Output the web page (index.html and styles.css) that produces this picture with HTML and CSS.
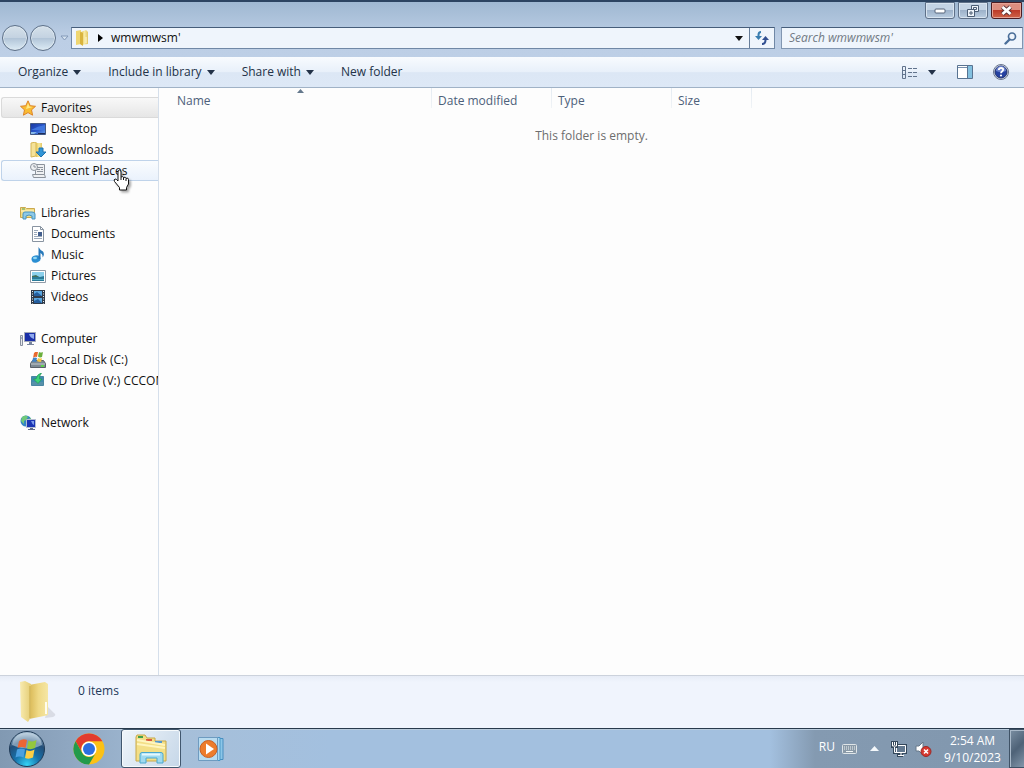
FILE: index.html
```html
<!DOCTYPE html>
<html lang="en">
<head>
<meta charset="utf-8">
<title>wmwmwsm'</title>
<link rel="stylesheet" href="styles.css">
</head>
<body>
<svg class="defs" aria-hidden="true">
  <defs>
    <linearGradient id="gold" x1="0" x2="1" y2="0"><stop offset="0" stop-color="#e2c04f"/><stop offset=".5" stop-color="#f8eaa2"/><stop offset="1" stop-color="#e3c765"/></linearGradient>
    <linearGradient id="flap" x1="0" x2="1" y2="0"><stop offset="0" stop-color="#f8ebb0"/><stop offset="1" stop-color="#e5cd74"/></linearGradient>
    <linearGradient id="leaf" x1="0" x2="1" y2="0"><stop offset="0" stop-color="#d9b855"/><stop offset=".5" stop-color="#efd986"/><stop offset="1" stop-color="#f5e6a4"/></linearGradient>
    <linearGradient id="screen" x1="0" x2="1" y1="0" y2="1"><stop offset="0" stop-color="#1838a0"/><stop offset=".55" stop-color="#2a58cc"/><stop offset="1" stop-color="#6ba4ee"/></linearGradient>
    <radialGradient id="orb" cx=".5" cy=".95" r=".9"><stop offset="0" stop-color="#35d3f5"/><stop offset=".4" stop-color="#1772ab"/><stop offset=".75" stop-color="#234e78"/><stop offset="1" stop-color="#a5bed2"/></radialGradient>
    <symbol id="caret" viewBox="0 0 8 5"><path d="M0 0h8L4 5z" fill="currentColor"/></symbol>
  </defs>
</svg>
<main class="window">
  <header class="frame">
    <div class="caption">
      <button class="cap" aria-label="Minimize"><svg width="12" height="6" viewBox="0 0 12 6"><rect x="1" y="1" width="10" height="4" rx="1" fill="#fff" stroke="#56657a"/></svg></button>
      <button class="cap" aria-label="Restore"><svg width="14" height="12" viewBox="0 0 14 12" fill="#eef4fa" stroke="#4c5e75"><path d="M5.500 .5h7v6h-7z"/><path d="M7.500 2.500h3v2h-3z"/><path d="M1.500 4.500h7v7h-7z"/><path d="M4 7h2v2H4z"/></svg></button>
      <button class="cap close" aria-label="Close"><svg width="13" height="11" viewBox="0 0 13 11"><path d="M2.500 2l8 7M10.500 2l-8 7" stroke="#5b3236" stroke-width="4.500"/><path d="M2.500 2l8 7M10.500 2l-8 7" stroke="#fff" stroke-width="2.800"/></svg></button>
    </div>
    <div class="navrow">
      <div class="travel">
        <button class="round" aria-label="Back"></button>
        <button class="round" aria-label="Forward"></button>
        <button class="recent" aria-label="Recent pages"><svg width="9" height="6" viewBox="0 0 9 6"><path d="M1 1h7L4.500 5z" fill="#d5e2f0" stroke="#8299b8"/></svg></button>
      </div>
      <div class="address">
        <div class="crumbs">
          <svg width="16" height="18" viewBox="0 0 16 18"><path d="M2 2l5-1v14l-5 1z" fill="#efd671"/><path d="M7 3l5-2 2 2v12l-7 1z" fill="url(#gold)"/><path d="M6 3l3 1v13l-3-2z" fill="#d9b43e"/><path d="M12 8v6" stroke="#fff8cf"/></svg>
          <svg class="arrow" width="5" height="8" viewBox="0 0 5 8"><path d="M0 0l5 4-5 4z"/></svg>
          <span>wmwmwsm'</span>
        </div>
        <button class="drop" aria-label="Previous locations"><svg width="8" height="5"><use href="#caret"/></svg></button>
        <button class="refresh" aria-label="Refresh"><svg width="14" height="14" viewBox="0 0 14 14" fill="none" stroke-width="2"><path d="M6 1Q3.500 1 3.500 4v2" stroke="#3a7eb0"/><path d="M0 5h7L3.500 9z" fill="#3a7eb0"/><path d="M7 13q3.500 0 3.500-4V8" stroke="#314f91"/><path d="M7 9h7l-3.500-4z" fill="#314f91"/></svg></button>
      </div>
      <label class="search">
        <input type="text" placeholder="Search wmwmwsm'" aria-label="Search wmwmwsm'">
        <svg width="13" height="13" viewBox="0 0 13 13" fill="none" stroke="#4a6e99"><circle cx="8" cy="4.500" r="3.500" stroke-width="1.700"/><path d="M5.500 7.500L1.500 11.500" stroke-width="2.400" stroke-linecap="round"/></svg>
      </label>
    </div>
  </header>
  <nav class="commands" aria-label="Commands">
    <button>Organize<svg width="8" height="5"><use href="#caret"/></svg></button>
    <button>Include in library<svg width="8" height="5"><use href="#caret"/></svg></button>
    <button>Share with<svg width="8" height="5"><use href="#caret"/></svg></button>
    <button>New folder</button>
    <div class="tools">
      <button aria-label="Change view"><svg width="16" height="13" viewBox="0 0 16 13" fill="none" stroke="#61738c"><path d="M.5.5h3v12h-3zM.5 4.500h3M.5 8.500h3"/><path d="M6 2.500h10M6 6.500h10M6 10.500h10" stroke-dasharray="4 1"/></svg></button>
      <button class="more" aria-label="More view options"><svg width="8" height="5"><use href="#caret"/></svg></button>
      <button class="preview" aria-label="Show the preview pane"><svg width="16" height="14" viewBox="0 0 16 14"><path d="M.5.5h15v13H.5z" fill="#fff" stroke="#587391"/><path d="M1 2.500h9" stroke="#7890ad"/><path d="M10 1h5v12h-5z" fill="#83c0df"/><path d="M10.500 1v12" stroke="#587391"/></svg></button>
      <button class="help" aria-label="Help"><svg width="16" height="16" viewBox="0 0 16 16"><circle cx="8" cy="8" r="7.500" fill="#dce3ee" stroke="#68748c"/><circle cx="8" cy="8" r="6" fill="#2541a1" stroke="#233268"/><path d="M3 7a5 5 0 0 1 10 0Q8 9 3 7" fill="#6c83ce"/><path d="M5.800 6q.2-2 2.300-2t2.100 1.800C10.200 7.300 8 7.200 8 9.200" fill="none" stroke="#fff" stroke-width="1.800"/><circle cx="8" cy="11.500" r="1.100" fill="#fff"/></svg></button>
    </div>
  </nav>
  <div class="content">
    <aside class="sidebar">
      <ul class="group">
        <li><a class="item head selected" href="#favorites"><svg viewBox="0 0 16 16"><path d="M8 .8l2.200 4.900 5.300.6-4 3.600 1.100 5.300L8 12.600l-4.600 2.600 1.100-5.300-4-3.600 5.300-.6z" fill="#f9bc32" stroke="#dd8429"/><path d="M8 3l1.400 3.600 3.400.5L6 9z" fill="#ffe887"/></svg><span>Favorites</span></a></li>
        <li><a class="item" href="#desktop"><svg viewBox="0 0 16 16"><path d="M.5 2.500h15v11H.5z" fill="url(#screen)" stroke="#425885"/><path d="M1 9q7-4 14-5v5z" fill="#4076df"/><path d="M1 11h6l-3 2H1z" fill="#85b7e8"/><path d="M8 12.500h7" stroke="#1c2d5c"/></svg><span>Desktop</span></a></li>
        <li><a class="item" href="#downloads"><svg viewBox="0 0 16 16"><path d="M1 1l5-1v14l-5 1z" fill="#f5e298" stroke="#d5b656"/><path d="M6 1h6v14H6z" fill="url(#gold)"/><path d="M9 6h4v4h3l-5 5-5-5h3z" fill="#3295d6" stroke="#2073ad"/></svg><span>Downloads</span></a></li>
        <li><a class="item hover" href="#recent"><svg viewBox="0 0 16 16" stroke="#8b929b" fill="#eef0f2"><path d="M5.500 1.500h9v10h-9z"/><path d="M7 4.500h6M7 6.500h3M11 6.500h2M7 8.500h6"/><circle cx="4" cy="4" r="3.500"/><path d="M4 2v2h2M2.500 11.500h12l1 3h-12z"/></svg><span>Recent Places</span></a></li>
      </ul>
      <ul class="group">
        <li><a class="item head" href="#libraries"><svg viewBox="0 0 16 16"><path d="M.5 2.500h5l1 1h8v9H.5z" fill="#f2dc86" stroke="#cba94e"/><path d="M2 4h3" stroke="#5ca356"/><path d="M1 6h13" stroke="#fff6c8"/><path d="M3 14V9q0-2 2-2h7q3 0 3 2v5h-3v-3q-3-2-6 0v3z" fill="#8dc9e8" stroke="#4994c1"/></svg><span>Libraries</span></a></li>
        <li><a class="item" href="#documents"><svg viewBox="0 0 16 16"><path d="M2.500.5h8l3 3v12h-11z" fill="#fff" stroke="#8994a1"/><path d="M10.500.5v3h3" fill="none" stroke="#8994a1"/><path d="M4 4.500h4M4 6.500h3M4 8.500h3M4 10.500h8M4 12.500h8" stroke="#9ba9ba"/><path d="M8 6h4v4H8z" fill="#435f8e"/></svg><span>Documents</span></a></li>
        <li><a class="item" href="#music"><svg viewBox="0 0 16 16"><ellipse cx="6" cy="12" rx="4.500" ry="3.500" fill="#2a8ed2" transform="rotate(-15 6 12)"/><path d="M8.500 12V0Q10 3 13 4.500q2 3-.5 6Q13 7 10.500 6v6z" fill="#2879ba"/><ellipse cx="5" cy="11" rx="2" ry="1.200" fill="#8fd6f4"/></svg><span>Music</span></a></li>
        <li><a class="item" href="#pictures"><svg viewBox="0 0 16 16"><path d="M.5 2.500h15v12H.5z" fill="#fff" stroke="#909ba7"/><path d="M2 4h12v9H2z" fill="#8bd0ec"/><path d="M2 9l4-1 4 1 4-1v5H2z" fill="#297a98"/><path d="M2 8l4-1 3 2H2z" fill="#426e58"/><path d="M2 11.500h12" stroke="#57b1c8"/></svg><span>Pictures</span></a></li>
        <li><a class="item" href="#videos"><svg viewBox="0 0 16 16"><path d="M1 1h14v14H1z" fill="#303b49"/><path d="M4 2h8v5H4zM4 9h8v5H4z" fill="#5aa6df"/><path d="M4 5l3-2 5 4H4zM4 12l4-2 4 4H4z" fill="#245e9e"/><path d="M2.500 2v13M13.500 2v13" stroke="#e9edf0" stroke-dasharray="1 1.500"/></svg><span>Videos</span></a></li>
      </ul>
      <ul class="group">
        <li><a class="item head" href="#computer"><svg viewBox="0 0 16 16"><path d="M.5 4.500h2v10h-2z" fill="#e8eaed" stroke="#8991a0"/><path d="M1 7h1" stroke="#6179a5"/><path d="M4.500 1.500h11v9h-11z" fill="#1a2fa8" stroke="#a3a9b8"/><path d="M9 3h5v5q-4-1-5-5" fill="#8ea8ee"/><path d="M9 11h3v2H9zM7 13h7v1H7z" fill="#79859e"/></svg><span>Computer</span></a></li>
        <li><a class="item" href="#local-disk"><svg viewBox="0 0 16 16"><path d="M.5 11.500l2-3h11l2 3v4H.5z" fill="#7d8a92" stroke="#596068"/><path d="M1 12h14" stroke="#c5cbcf"/><path d="M11 14h3" stroke="#5dd24f" stroke-width="2"/><path d="M4 1q2-2 4-1L7 5Q5 4 3 6z" fill="#e8692d"/><path d="M9 0q2 1 4 0l-1 5q-2 1-4-.5z" fill="#6aae3c"/><path d="M3 6q2-1 4 0l-1 4Q4 9 2 10z" fill="#3f83c6"/><path d="M8 6q2 1 4 0l-1 4q-2 0-4-1z" fill="#f3c440"/></svg><span>Local Disk (C:)</span></a></li>
        <li><a class="item" href="#cd-drive"><svg viewBox="0 0 16 16"><path d="M1.500 3.500h12v9h-12z" fill="#3e8daf" stroke="#4a86a2"/><path d="M2 9h11v3H2z" fill="#5791aa"/><path d="M8 10.500L3.500 6H6q1-5 5.500-6Q9 3 9.500 6H12z" fill="#3ed47a" stroke="#229a58" stroke-width=".7"/></svg><span>CD Drive (V:) CCCOM</span></a></li>
      </ul>
      <ul class="group">
        <li><a class="item head" href="#network"><svg viewBox="0 0 16 16"><circle cx="6" cy="6" r="5.500" fill="#3384c4"/><path d="M2 2q4-3 6 0L6 5 4 6v3L1 6zM8 4l3-1v4H8z" fill="#70c979"/><path d="M6.500 4.500h9v8h-9z" fill="#1a35b4" stroke="#b4bed3"/><path d="M11 6h3v4q-2-1-3-4" fill="#7d9cec"/><path d="M10 13h3v1h2v1H8v-1h2z" fill="#5f6c8b"/></svg><span>Network</span></a></li>
      </ul>
      <svg class="cursor" width="18" height="22" viewBox="0 0 18 22"><path d="M5 12V3q0-2 1.500-2T8 3v5q2-1 2.500.5 2-1 2.500.8 2.500-.8 2.500 1.200V15l-2 3.500V21H6.500v-2.500L1.500 12.500q-1-2 .5-2.500 1-.5 3 2z" fill="#fff" stroke="#111"/><path d="M8 8v3M10.500 8.500V11M13 9.500V12" stroke="#111"/></svg>
    </aside>
    <section class="files">
      <table>
        <colgroup><col class="col-name"><col class="col-std"><col class="col-std"><col class="col-size"><col></colgroup>
        <thead><tr><th class="sorted">Name<svg class="sort" width="7" height="4" viewBox="0 0 7 4"><path d="M0 4l3.500-4L7 4z" fill="#64788c"/></svg></th><th>Date modified</th><th>Type</th><th>Size</th><th></th></tr></thead>
        <tbody><tr><td colspan="5">This folder is empty.</td></tr></tbody>
      </table>
    </section>
  </div>
  <footer class="details">
    <svg width="40" height="44" viewBox="0 0 40 44"><path d="M26 38l3-11 6 6q3 2-1 4z" fill="#c9ccd6" opacity=".6"/><path d="M10 5l16-3 3 2v31l-4 1-15 3z" fill="url(#leaf)"/><path d="M1 2l5-1 6 3v33l-3 5-7-5z" fill="url(#flap)"/><path d="M11 6v32" stroke="#c9a849"/><path d="M27 22v12" stroke="#fffdf0" stroke-width="2"/></svg>
    <span>0 items</span>
  </footer>
</main>
<nav class="taskbar" aria-label="Taskbar">
  <button class="start" aria-label="Start"><svg width="38" height="38" viewBox="0 0 38 38"><circle cx="19" cy="19" r="17.500" fill="url(#orb)" stroke="#1f3a56"/><path d="M4 15Q6 3 19 3t15 12q-14 7-30 0" fill="#d7e5ef" opacity=".5"/><path d="M11 11q4-3 8-1l-1.500 8q-4-2-8 0z" fill="#eb6634"/><path d="M20.500 10.500q4 2 8-.5L27 18q-4 2-8 .5z" fill="#94c73d"/><path d="M9 19.500q4-2 8 0l-1.500 8q-4-2-8 0z" fill="#4aa0e0"/><path d="M18.500 20q4 2 8-.5l-1.500 8q-4 2-8 .5z" fill="#fdce45"/></svg></button>
  <button class="task chrome" aria-label="Google Chrome"><svg width="32" height="32" viewBox="0 0 32 32"><circle cx="16" cy="16" r="15.500" fill="#fbc116"/><path d="M2.600 8.200A15.500 15.500 0 0 1 29.400 8.200H16a7.800 7.800 0 0 0-6.800 11.600z" fill="#e23b2e"/><path d="M2.600 8.200A15.500 15.500 0 0 0 16 31.500l6.800-11.600a7.800 7.800 0 0 1-13.600 0z" fill="#229a4b"/><circle cx="16" cy="16" r="7.600" fill="#fff"/><circle cx="16" cy="16" r="6" fill="#2c6fe0"/></svg></button>
  <button class="task active" aria-label="Windows Explorer"><svg width="34" height="30" viewBox="0 0 34 30"><path d="M2 3l1-2h8l2 3h8v3h11v20H2z" fill="#f3df87" stroke="#c8a849"/><path d="M4 2h5v2H4z" fill="#41a04c"/><path d="M12 5h6v2h-6z" fill="#d9593e"/><path d="M21 7h7v2h-7z" fill="#5698ca"/><path d="M3 6l28 5M3 10l28 4" stroke="#fff5bf" stroke-width="2"/><path d="M6 29V20.500q0-2 2-2h19q2 0 2 2V29h-6v-5H12v5z" fill="#9fdaf0" stroke="#4ba8cf"/><path d="M8 20.500h18" stroke="#e4f8ff" stroke-width="2"/></svg></button>
  <button class="task" aria-label="Windows Media Player"><svg width="26" height="26" viewBox="0 0 26 26"><path d="M7 2.500h18v21H7z" fill="#8bc6e8" stroke="#488fc0"/><path d="M4 1.500h18v23H4z" fill="#a9d8f2" stroke="#4a97c6"/><path d="M.5 1.500h19v23H.5z" fill="#b9dcf0" stroke="#6e9bc0"/><circle cx="10.500" cy="13" r="8.500" fill="#ed7c2c" stroke="#c86125"/><path d="M8 7.500v11l8-5.500z" fill="#fff"/></svg></button>
  <div class="tray">
    <span class="lang">RU</span>
    <svg class="keyboard" width="15" height="10" viewBox="0 0 15 10"><rect x=".5" y=".5" width="14" height="9" rx="1" fill="#8a9aa8" stroke="#dfe5e8"/><path d="M2 3h11M2 5h11" stroke="#f1f5f5" stroke-dasharray="1 1"/><path d="M4 7.500h7" stroke="#f1f5f5"/></svg>
    <button class="expand" aria-label="Show hidden icons"><svg width="9" height="5" viewBox="0 0 9 5"><path d="M0 5l4.500-5L9 5z" fill="#f4f8fb"/></svg></button>
    <svg class="net" width="16" height="16" viewBox="0 0 16 16" fill="none"><path d="M5 3h11v10h-4v3H6v-3H4z" fill="#33475b"/><path d="M5.500 4.500h9v7h-9z" fill="#637990" stroke="#fff"/><path d="M10 12v2M7 14.500h6" stroke="#fff"/><path d="M0 0h7v7H4v6H2V7H0z" fill="#33475b"/><path d="M1.500 1v4h4V1M3.500 1v3M3.500 6v5.500H6" stroke="#fff"/></svg>
    <svg class="sound" width="17" height="16" viewBox="0 0 17 16"><path d="M1 5h3l4-4v13l-4-4H1z" fill="#fff" stroke="#66788a"/><circle cx="11" cy="10.500" r="5" fill="#d7372f" stroke="#9b2926"/><path d="M9 8.500l4 4M13 8.500l-4 4" stroke="#fff" stroke-width="1.600"/></svg>
    <time class="clock"><span>2:54 AM</span><span>9/10/2023</span></time>
    <button class="peek" aria-label="Show desktop"></button>
  </div>
</nav>
</body>
</html>
```
FILE: styles.css
```css
* { box-sizing: border-box; }
body {
  margin: 0;
  height: 100vh;
  display: flex;
  flex-direction: column;
  overflow: hidden;
  font: 12px/16px "Open Sans", "Noto Sans", sans-serif;
  color: #111;
  background: #fdfdfd;
}
button { border: 0; padding: 0; background: none; font: inherit; color: inherit; display: flex; align-items: center; justify-content: center; }
svg { flex: none; display: block; }
.defs { position: absolute; width: 0; height: 0; }
.window { flex: 1; min-height: 0; display: flex; flex-direction: column; }

.frame { border-top: 2px solid #2c4462; height: 57px; background: linear-gradient(#9fb8d2, #bccee5 35px, #bdcfe6); display: flex; flex-direction: column; }
.caption { display: flex; justify-content: flex-end; gap: 3px; padding-right: 2px; }
.cap { width: 30px; height: 17px; border: 1px solid #5e7088; border-radius: 0 0 3px 3px; box-shadow: inset 0 0 0 1px #d8e4f0; background: linear-gradient(#c4d4e5 50%, #9db2ca 50%, #bacde0); }
.cap.close { width: 31px; border-color: #4c1c22; box-shadow: inset 0 0 0 1px #e5a396; background: linear-gradient(#dc8d7f 45%, #bd3b29 50%, #cf6349); }
.navrow { display: flex; padding: 6px 1px 0 2px; height: 30px; }
.travel { display: flex; align-items: center; gap: 2px; width: 69px; height: 26px; }
.round { width: 26px; height: 26px; border: 1px solid #5d7088; border-radius: 50%; background: linear-gradient(#d6e1ea, #c3d2e1 50%, #b2c5d8 52%, #dcebf5); box-shadow: inset 0 0 0 1px #dce7ef; }
.recent { width: 12px; }
.address { flex: 1; display: flex; height: 22px; margin-top: 2px; border: 1px solid #7088a6; border-top-color: #465d7a; background: #eff5fc; }
.crumbs { flex: 1; display: flex; align-items: center; padding-left: 2px; }
.crumbs .arrow { margin: 0 8px; }
.drop { width: 20px; }
.refresh { width: 25px; border-left: 1px solid #667d99; }
.search { width: 242px; height: 22px; margin: 2px 0 0 6px; padding: 0 5px 0 7px; display: flex; align-items: center; border: 1px solid #8196b1; border-top-color: #465d7a; background: #eff5fc; }
.search input { flex: 1; min-width: 0; border: 0; padding: 0; outline: 0; background: none; font: italic 12px/16px "Open Sans", "Noto Sans", sans-serif; }
.search input::placeholder { color: #727a84; opacity: 1; }

.commands { display: flex; align-items: center; height: 31px; padding: 0 15px 0 18px; gap: 27px; color: #233248; background: linear-gradient(#f8fbfe, #e8f0fa 50%, #dce7f5 52%, #dde8f6); border-bottom: 1px solid #a0b2c6; }
.commands button { gap: 5px; }
.tools { margin-left: auto; display: flex; align-items: center; }
.commands .more { margin-left: 10px; }
.commands .preview { margin-left: 21px; }
.commands .help { margin-left: 20px; }

.content { flex: 1; min-height: 0; display: flex; }
.sidebar { position: relative; width: 159px; border-right: 1px solid #d5dfeb; padding-top: 9px; display: flex; flex-direction: column; gap: 21px; }
.group { list-style: none; margin: 0; padding: 0; }
.item { display: flex; align-items: center; gap: 5px; height: 21px; margin-left: 1px; padding-left: 28px; border: 1px solid transparent; border-right: 0; border-radius: 3px 0 0 3px; overflow: hidden; color: #111; text-decoration: none; white-space: nowrap; }
.item.head { padding-left: 18px; }
.item svg { width: 16px; height: 16px; }
.item.selected { border-color: #dadada; background: linear-gradient(#f8f8f8, #e6e6e6); }
.item.hover { border-color: #bfd3ea; background: linear-gradient(#fafcfe, #eaf2fc); }
.cursor { position: absolute; left: 113px; top: 81px; filter: drop-shadow(2px 2px 1px #0005); }

.files { flex: 1; min-width: 0; }
table { width: 100%; table-layout: fixed; border-collapse: separate; border-spacing: 0; }
.col-name { width: 273px; }
.col-std { width: 120px; }
.col-size { width: 80px; }
th { position: relative; height: 24px; padding: 2px 0 0 6px; text-align: left; font-weight: 400; color: #4c607a; background: linear-gradient(#e4ebf2, #f0f3f6) right top / 1px 20px no-repeat; }
th:first-child { padding-left: 18px; }
th:last-child { background: none; }
.sort { position: absolute; left: 138px; top: 1px; }
td { padding: 16px 0; text-align: center; color: #6d6d6d; }

.details { display: flex; align-items: flex-start; gap: 19px; height: 53px; padding: 4px 19px; border-top: 1px solid #ccd2dc; background: linear-gradient(#e7ecf6, #f0f4fd 6px); color: #1e395b; }
.details span { padding-top: 3px; }

.taskbar { display: flex; height: 40px; border-top: 1px solid #28394c; box-shadow: inset 0 1px #b9cbdc; background: linear-gradient(90deg, #8199b2 0, #8da5bf 60px, #a6bfd9 180px, #a3c0df 330px, #a3c0df 770px, #849ab1 815px, #8197ae); }
.start { width: 54px; }
.task { width: 60px; height: 39px; }
.task.chrome { margin: 0 2px 0 5px; }
.task.active { border: 1px solid #41576e; border-radius: 3px; box-shadow: inset 0 0 0 1px #f6fafc; background: linear-gradient(120deg, #eff5fa, #c6d7e8); }
.tray { margin-left: auto; display: flex; align-items: center; color: #fff; }
.lang { margin-bottom: 4px; }
.keyboard { margin-left: 7px; }
.expand { margin-left: 13px; }
.net { margin-left: 12px; }
.sound { margin-left: 8px; }
.clock { width: 77px; padding-left: 4px; display: flex; flex-direction: column; text-align: center; line-height: 17px; }
.peek { width: 15px; height: 39px; border: 1px solid #3f5266; border-right: 0; box-shadow: inset 1px 1px #a9b9c9; background: linear-gradient(135deg, #7b8fa3, #4e6277 50%, #8296aa); }
```
